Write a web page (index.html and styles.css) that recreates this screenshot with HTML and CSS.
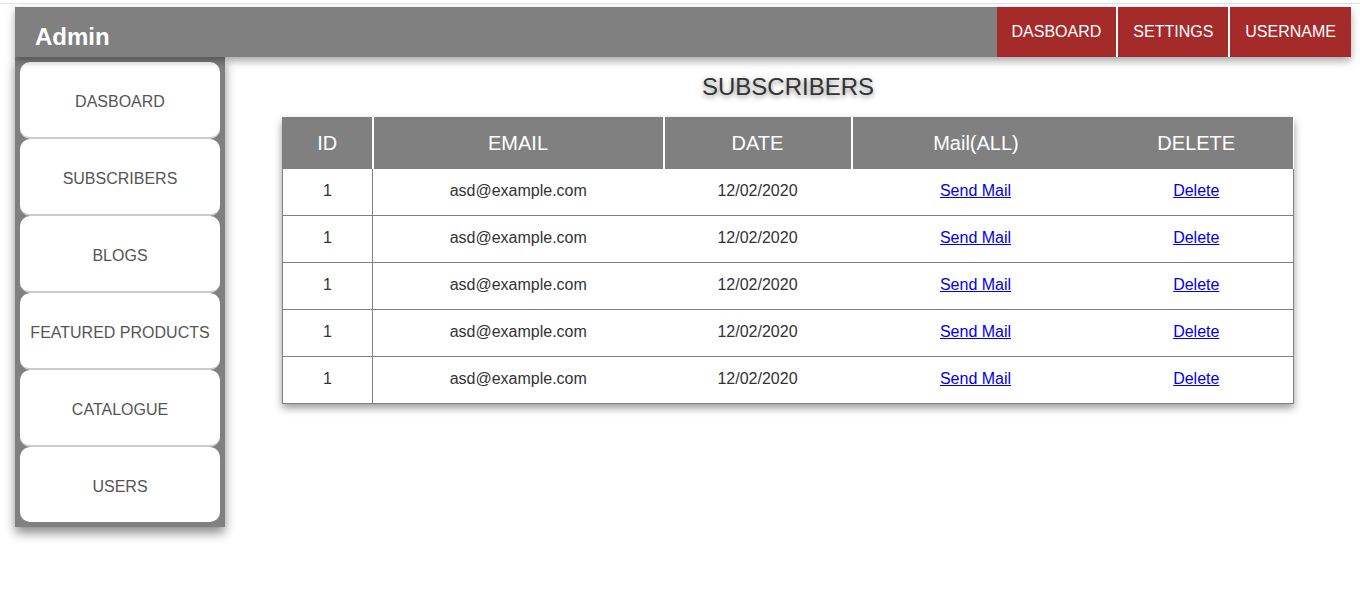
FILE: index.html
```html
<!DOCTYPE html>
<html>
<head>
<meta charset="utf-8">
<title>Admin</title>
<link rel="stylesheet" href="styles.css">
</head>
<body>
<div class="topline"></div>
<header class="header">
  <div class="brand">Admin</div>
  <nav class="topnav">
    <a class="topnav-item">DASBOARD</a>
    <a class="topnav-item">SETTINGS</a>
    <a class="topnav-item">USERNAME</a>
  </nav>
</header>
<div class="layout">
  <aside class="sidebar">
    <a class="side-item">DASBOARD</a>
    <a class="side-item">SUBSCRIBERS</a>
    <a class="side-item">BLOGS</a>
    <a class="side-item">FEATURED PRODUCTS</a>
    <a class="side-item">CATALOGUE</a>
    <a class="side-item">USERS</a>
  </aside>
  <main class="main">
    <h2 class="title">SUBSCRIBERS</h2>
    <table class="subs">
      <colgroup>
        <col class="c-id"><col class="c-email"><col class="c-date"><col class="c-mail"><col class="c-del">
      </colgroup>
      <thead>
        <tr><th class="sep">ID</th><th class="sep">EMAIL</th><th class="sep">DATE</th><th>Mail(ALL)</th><th class="last">DELETE</th></tr>
      </thead>
      <tbody>
        <tr><td class="idc">1</td><td>asd@example.com</td><td>12/02/2020</td><td><a href="#">Send Mail</a></td><td><a href="#">Delete</a></td></tr>
        <tr><td class="idc">1</td><td>asd@example.com</td><td>12/02/2020</td><td><a href="#">Send Mail</a></td><td><a href="#">Delete</a></td></tr>
        <tr><td class="idc">1</td><td>asd@example.com</td><td>12/02/2020</td><td><a href="#">Send Mail</a></td><td><a href="#">Delete</a></td></tr>
        <tr><td class="idc">1</td><td>asd@example.com</td><td>12/02/2020</td><td><a href="#">Send Mail</a></td><td><a href="#">Delete</a></td></tr>
        <tr><td class="idc">1</td><td>asd@example.com</td><td>12/02/2020</td><td><a href="#">Send Mail</a></td><td><a href="#">Delete</a></td></tr>
      </tbody>
    </table>
  </main>
</div>
</body>
</html>
```

FILE: styles.css
```css
* { box-sizing: border-box; }
html, body { margin: 0; padding: 0; background: #fff; }
body {
  font-family: "Liberation Sans", Arial, sans-serif;
  color: #333;
  min-height: 100vh;
  padding-bottom: 20px;
}
.topline {
  margin-top: 3px;
  height: 1px;
  background: #e3e3e3;
}
.header {
  margin: 3px 9px 0 15px;
  height: 50px;
  background: #808080;
  display: flex;
  justify-content: space-between;
  box-shadow: 0 4px 8px rgba(0,0,0,0.35);
  position: relative;
  z-index: 2;
}
.brand {
  color: #fff;
  font-weight: bold;
  font-size: 24px;
  line-height: 28px;
  padding: 16px 0 0 20px;
}
.topnav { display: flex; }
.topnav-item {
  background: #a52a2a;
  color: #fff;
  font-size: 16px;
  display: flex;
  align-items: center;
  padding: 0 15px;
  text-decoration: none;
}
.topnav-item + .topnav-item { border-left: 2px solid #fff; }

.layout {
  display: flex;
  align-items: flex-start;
  margin: 0 9px 0 15px;
}
.sidebar {
  width: 210px;
  flex: none;
  background: #808080;
  padding: 5px;
  display: flex;
  flex-direction: column;
  box-shadow: 0 6px 10px rgba(0,0,0,0.45);
  position: relative;
  z-index: 1;
}
.side-item {
  height: 77px;
  background: #fff;
  border-radius: 10px;
  border-bottom: 2px solid #cccccc;
  display: flex;
  align-items: center;
  justify-content: center;
  font-size: 16px;
  color: #555;
  padding-top: 4px;
}
.side-item:last-child {
  height: 75px;
  border-bottom: none;
  padding-top: 4px;
}
.main {
  flex: 1;
  display: flex;
  flex-direction: column;
  align-items: center;
}
.title {
  margin: 17px 0 17px;
  font-size: 24px;
  font-weight: normal;
  line-height: 26px;
  color: #333;
  text-shadow: 0 2px 5px rgba(0,0,0,0.45);
}
.subs {
  width: 1011px;
  border-collapse: collapse;
  table-layout: fixed;
  border: 1px solid #808080;
  box-shadow: 0 4px 8px rgba(0,0,0,0.4);
}
.c-id { width: 90px; }
.c-email { width: 291px; }
.c-date { width: 188px; }
.c-mail { width: 248px; }
.c-del { width: 194px; }
.subs th {
  background: #808080;
  color: #fff;
  font-weight: normal;
  font-size: 20px;
  height: 51px;
  padding: 0;
  text-align: center;
}
.subs th.sep { border-right: 2px solid #fff; }
.subs th.last { border-right: 1px solid #fff; }
.subs td {
  height: 47px;
  padding: 0 0 2px;
  text-align: center;
  font-size: 16px;
  color: #333;
  border-bottom: 1px solid #808080;
}
.subs td.idc { border-right: 1px solid #808080; }
.subs a { color: #0000ee; text-decoration: underline; }
```
